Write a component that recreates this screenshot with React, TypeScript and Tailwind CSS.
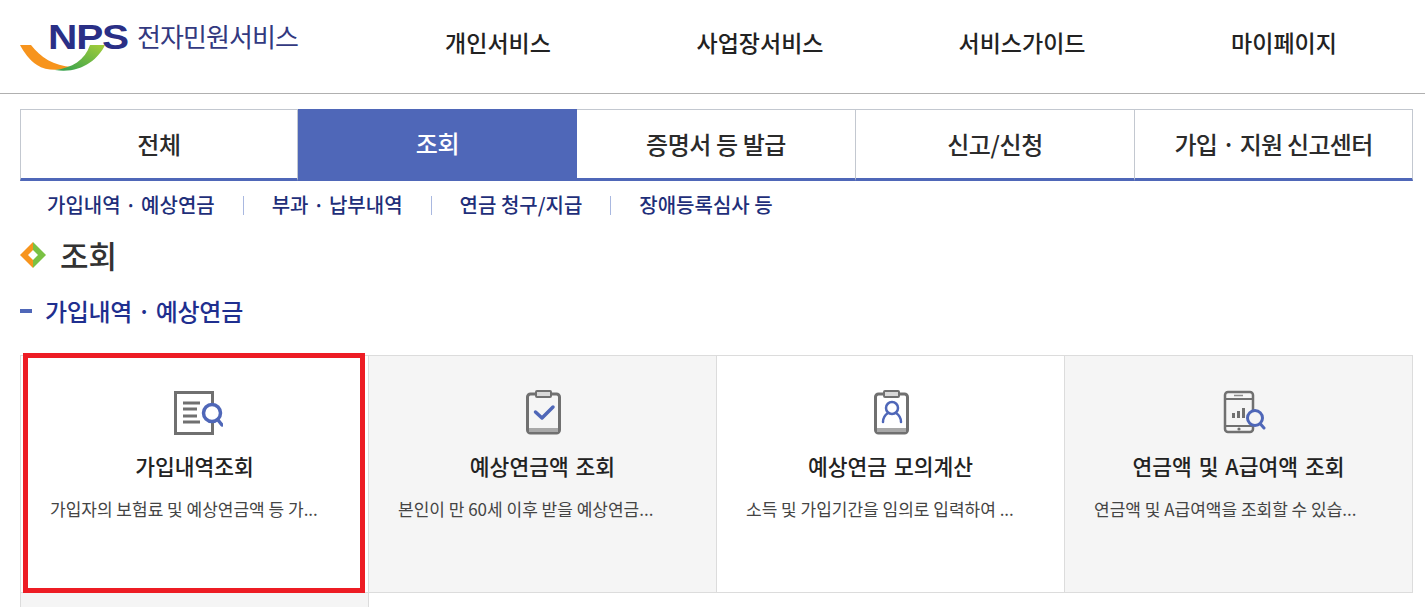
import React from 'react';

const font = { fontFamily: '"Noto Sans CJK KR", "Noto Sans", sans-serif' };

const navItems = ['개인서비스', '사업장서비스', '서비스가이드', '마이페이지'];

const tabs = [
  { label: '전체', active: false, width: 'w-[278px]', tracking: 'tracking-[-0.4px]' },
  { label: '조회', active: true, width: 'w-[279px]', tracking: 'tracking-[-0.4px]' },
  { label: '증명서 등 발급', active: false, width: 'w-[279px]', tracking: 'tracking-[-0.4px]' },
  { label: '신고/신청', active: false, width: 'w-[279px]', tracking: 'tracking-[-0.4px]' },
  { label: '가입 · 지원 신고센터', active: false, width: 'flex-1', tracking: 'tracking-[-0.7px]' },
];

const subTabs = ['가입내역 · 예상연금', '부과 · 납부내역', '연금 청구/지급', '장애등록심사 등'];

function Logo() {
  return (
    <div className="relative h-[93px] w-[300px] shrink-0">
      <svg className="absolute left-[20px] top-[44px]" width="86" height="28" viewBox="0 0 86 28">
        <defs>
          <linearGradient id="swoosh" x1="0" y1="1" x2="1" y2="0">
            <stop offset="0" stopColor="#2e9e4f" />
            <stop offset="1" stopColor="#a6ce39" />
          </linearGradient>
        </defs>
        <path d="M0 1 L11 1 C20 13 34 22 52 23 C40 27 26 27 17 21 C9 16 4 8 0 1Z" fill="#f7941d" />
        <path d="M35 26 C52 24 65 16 70 1 L85 1 C78 16 60 30 35 26Z" fill="url(#swoosh)" />
      </svg>
      <span
        className="absolute left-[48px] top-[17px] origin-left scale-x-[1.16] text-[35px] leading-[40px] font-bold tracking-[-1px] text-[#2a2f86]"
        style={{ fontFamily: '"Liberation Sans", sans-serif' }}
      >
        NPS
      </span>
      <span className="absolute left-[137px] top-[20px] text-[26px] leading-[32px] tracking-[-0.9px] text-[#33397f]">
        전자민원서비스
      </span>
    </div>
  );
}

function DocSearchIcon() {
  return (
    <svg width="50" height="46" viewBox="0 0 50 46" fill="none">
      <rect x="2.5" y="3.5" width="37" height="41" stroke="#707070" strokeWidth="3" />
      <path d="M10 14H27M10 20H24M10 27H24M10 33H27" stroke="#707070" strokeWidth="3" />
      <circle cx="39" cy="24" r="8.5" fill="#ffffff" stroke="#4f67b8" strokeWidth="3.5" />
      <path d="M45 31L49 36" stroke="#4f67b8" strokeWidth="3.5" strokeLinecap="round" />
    </svg>
  );
}

function ClipboardFrame() {
  return (
    <>
      <rect x="3.5" y="5" width="32" height="39" rx="3" stroke="#707070" strokeWidth="3" />
      <rect x="12" y="2" width="15" height="6" rx="1" fill="#d8d8d8" stroke="#707070" strokeWidth="2" />
      <rect x="5" y="39" width="29" height="4" fill="#a8a8a8" />
    </>
  );
}

function ClipboardCheckIcon() {
  return (
    <svg width="38" height="46" viewBox="0 0 38 46" fill="none">
      <ClipboardFrame />
      <path d="M11.5 23L18 29L29 18" stroke="#4f67b8" strokeWidth="3.5" strokeLinecap="round" strokeLinejoin="round" />
    </svg>
  );
}

function ClipboardUserIcon() {
  return (
    <svg width="38" height="46" viewBox="0 0 38 46" fill="none">
      <ClipboardFrame />
      <circle cx="20" cy="19" r="6" stroke="#4f67b8" strokeWidth="2.5" />
      <path d="M11 33C11 28 13 26 16 24M29 33C29 28 27 26 24 24" stroke="#4f67b8" strokeWidth="2.5" strokeLinecap="round" />
    </svg>
  );
}

function PhoneChartIcon() {
  return (
    <svg width="44" height="46" viewBox="0 0 44 46" fill="none">
      <rect x="3" y="3" width="28" height="40" rx="3" stroke="#707070" strokeWidth="2.5" />
      <path d="M3 10H31M3 37H31" stroke="#707070" strokeWidth="2" />
      <path d="M12 6.5H21" stroke="#8a8a8a" strokeWidth="1.5" />
      <circle cx="17" cy="40" r="1.6" fill="#707070" />
      <path d="M11.5 29V24M16.5 29V22M21.5 29V19" stroke="#707070" strokeWidth="3" />
      <circle cx="33" cy="29" r="7.5" fill="#f5f5f5" stroke="#4f67b8" strokeWidth="3" />
      <path d="M38.5 35L42 39" stroke="#4f67b8" strokeWidth="3" strokeLinecap="round" />
    </svg>
  );
}

const cards = [
  { title: '가입내역조회', desc: '가입자의 보험료 및 예상연금액 등 가...', icon: DocSearchIcon, bg: 'bg-white', width: 'w-[348px]', shift: 'ml-[6px]' },
  { title: '예상연금액 조회', desc: '본인이 만 60세 이후 받을 예상연금...', icon: ClipboardCheckIcon, bg: 'bg-[#f5f5f5]', width: 'w-[348px]', shift: '' },
  { title: '예상연금 모의계산', desc: '소득 및 가입기간을 임의로 입력하여 ...', icon: ClipboardUserIcon, bg: 'bg-white', width: 'w-[348px]', shift: '' },
  { title: '연금액 및 A급여액 조회', desc: '연금액 및 A급여액을 조회할 수 있습...', icon: PhoneChartIcon, bg: 'bg-[#f5f5f5]', width: 'flex-1', shift: 'ml-[10px]' },
];

export default function App() {
  return (
    <div className="h-[607px] w-[1425px] overflow-hidden bg-white" style={font}>
      {/* Header */}
      <header className="flex h-[94px] border-b border-[#b0b0b0]">
        <Logo />
        <nav className="flex flex-1 pl-[67px] pt-[26px]">
          {navItems.map((item) => (
            <a key={item} className="w-[262px] shrink-0 text-center text-[23px] leading-[32px] font-medium text-[#222222]">
              {item}
            </a>
          ))}
        </nav>
      </header>

      {/* Tabs */}
      <div className="ml-[20px] mr-[12px] mt-[15px] flex h-[72px]">
        {tabs.map((tab) => (
          <div
            key={tab.label}
            className={`${tab.width} ${tab.tracking} flex items-center justify-center border-b-[3px] border-b-[#4f67b8] pb-[1px] text-[24px] font-medium ${
              tab.active
                ? 'bg-[#4f67b8] text-white'
                : 'border-t border-r border-[#c3c8d0] border-b-[#4f67b8] bg-white text-[#2b2b2b] first:border-l'
            }`}
          >
            {tab.label}
          </div>
        ))}
      </div>

      {/* Sub tabs */}
      <div className="flex h-[48px] items-center pl-[47px]">
        {subTabs.map((item, i) => (
          <React.Fragment key={item}>
            {i > 0 && <span className="mx-[28px] h-[19px] w-px bg-[#a9b8e0]" />}
            <span className="text-[20px] font-medium text-[#1f2f7a]">{item}</span>
          </React.Fragment>
        ))}
      </div>

      {/* Page title */}
      <div className="flex h-[52px] items-center pl-[20px]">
        <svg width="26" height="26" viewBox="0 0 26 26">
          <path d="M13 0L13 8L8 13L0 13Z" fill="#f7941d" />
          <path d="M0 13L8 13L13 18L13 26Z" fill="#f7941d" />
          <path d="M13 0L26 13L18 13L13 8Z" fill="#7ac143" />
          <path d="M26 13L13 26L13 18L18 13Z" fill="#7ac143" />
        </svg>
        <h1 className="ml-[14px] text-[31px] font-medium leading-[40px] text-[#333333]">조회</h1>
      </div>

      {/* Section title */}
      <div className="flex h-[60px] items-center pl-[20px]">
        <span className="h-[4px] w-[12px] bg-[#4f67b8]" />
        <h2 className="ml-[13px] text-[24px] font-medium leading-[32px] tracking-[-0.3px] text-[#1f2f8f]">가입내역 · 예상연금</h2>
      </div>

      {/* Cards */}
      <div className="relative ml-[20px] mr-[12px] mt-[14px]">
        <div className="flex h-[238px] border border-[#dcdcdc]">
          {cards.map((card, i) => {
            const Icon = card.icon;
            return (
              <div
                key={card.title}
                className={`${card.width} ${card.bg} flex flex-col items-center pt-[33px] ${i < 3 ? 'border-r border-[#dcdcdc]' : ''}`}
              >
                <div className={`flex h-[48px] items-start ${card.shift}`}>
                  <Icon />
                </div>
                <h3 className="mt-[15px] text-[21.5px] leading-[28px] font-medium text-[#222222] [word-spacing:2px]">{card.title}</h3>
                <p className="mt-[17px] self-start pl-[29px] text-[17px] leading-[24px] text-[#444444]">{card.desc}</p>
              </div>
            );
          })}
        </div>
        <div className="h-[20px] w-[349px] border-x border-[#dcdcdc] bg-[#f5f5f5]" />
        {/* Highlight box */}
        <div className="absolute left-[3px] top-[-2px] h-[240px] w-[342px] border-[5px] border-[#ed1c24]" />
      </div>
    </div>
  );
}
